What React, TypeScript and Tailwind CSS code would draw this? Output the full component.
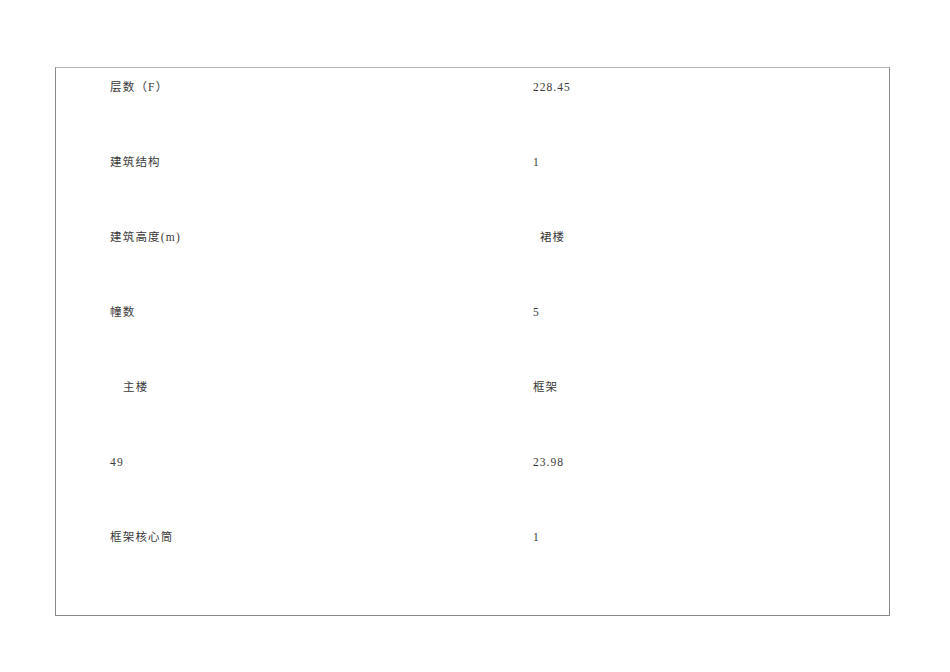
const rows: [string, string, string, string][] = [
  ["层数（F）", "228.45", "pl-[54px]", "pl-0"],
  ["建筑结构", "1", "pl-[54px]", "pl-0"],
  ["建筑高度(m)", "裙楼", "pl-[54px]", "pl-[7px]"],
  ["幢数", "5", "pl-[54px]", "pl-0"],
  ["主楼", "框架", "pl-[67px]", "pl-0"],
  ["49", "23.98", "pl-[54px]", "pl-0"],
  ["框架核心筒", "1", "pl-[54px]", "pl-0"],
];

export default function App() {
  return (
    <div className="w-[950px] h-[672px] bg-white pt-[67px] pl-[55px]">
      <div
        className="w-[835px] h-[549px] border border-[#8a8a8a] border-t-[#b4b4b4] pt-[11px] text-[11.5px] leading-[16px] text-[#3a3a3a]"
        style={{ fontFamily: '"Liberation Serif", "Noto Sans CJK SC", serif' }}
      >
        {rows.map(([a, b, pa, pb], i) => (
          <div key={i} className="flex h-[75px]">
            <div className={`w-[477px] tracking-[1.2px] ${pa}`}>{a}</div>
            <div className={`flex-1 tracking-[1px] ${pb}`}>{b}</div>
          </div>
        ))}
      </div>
    </div>
  );
}
